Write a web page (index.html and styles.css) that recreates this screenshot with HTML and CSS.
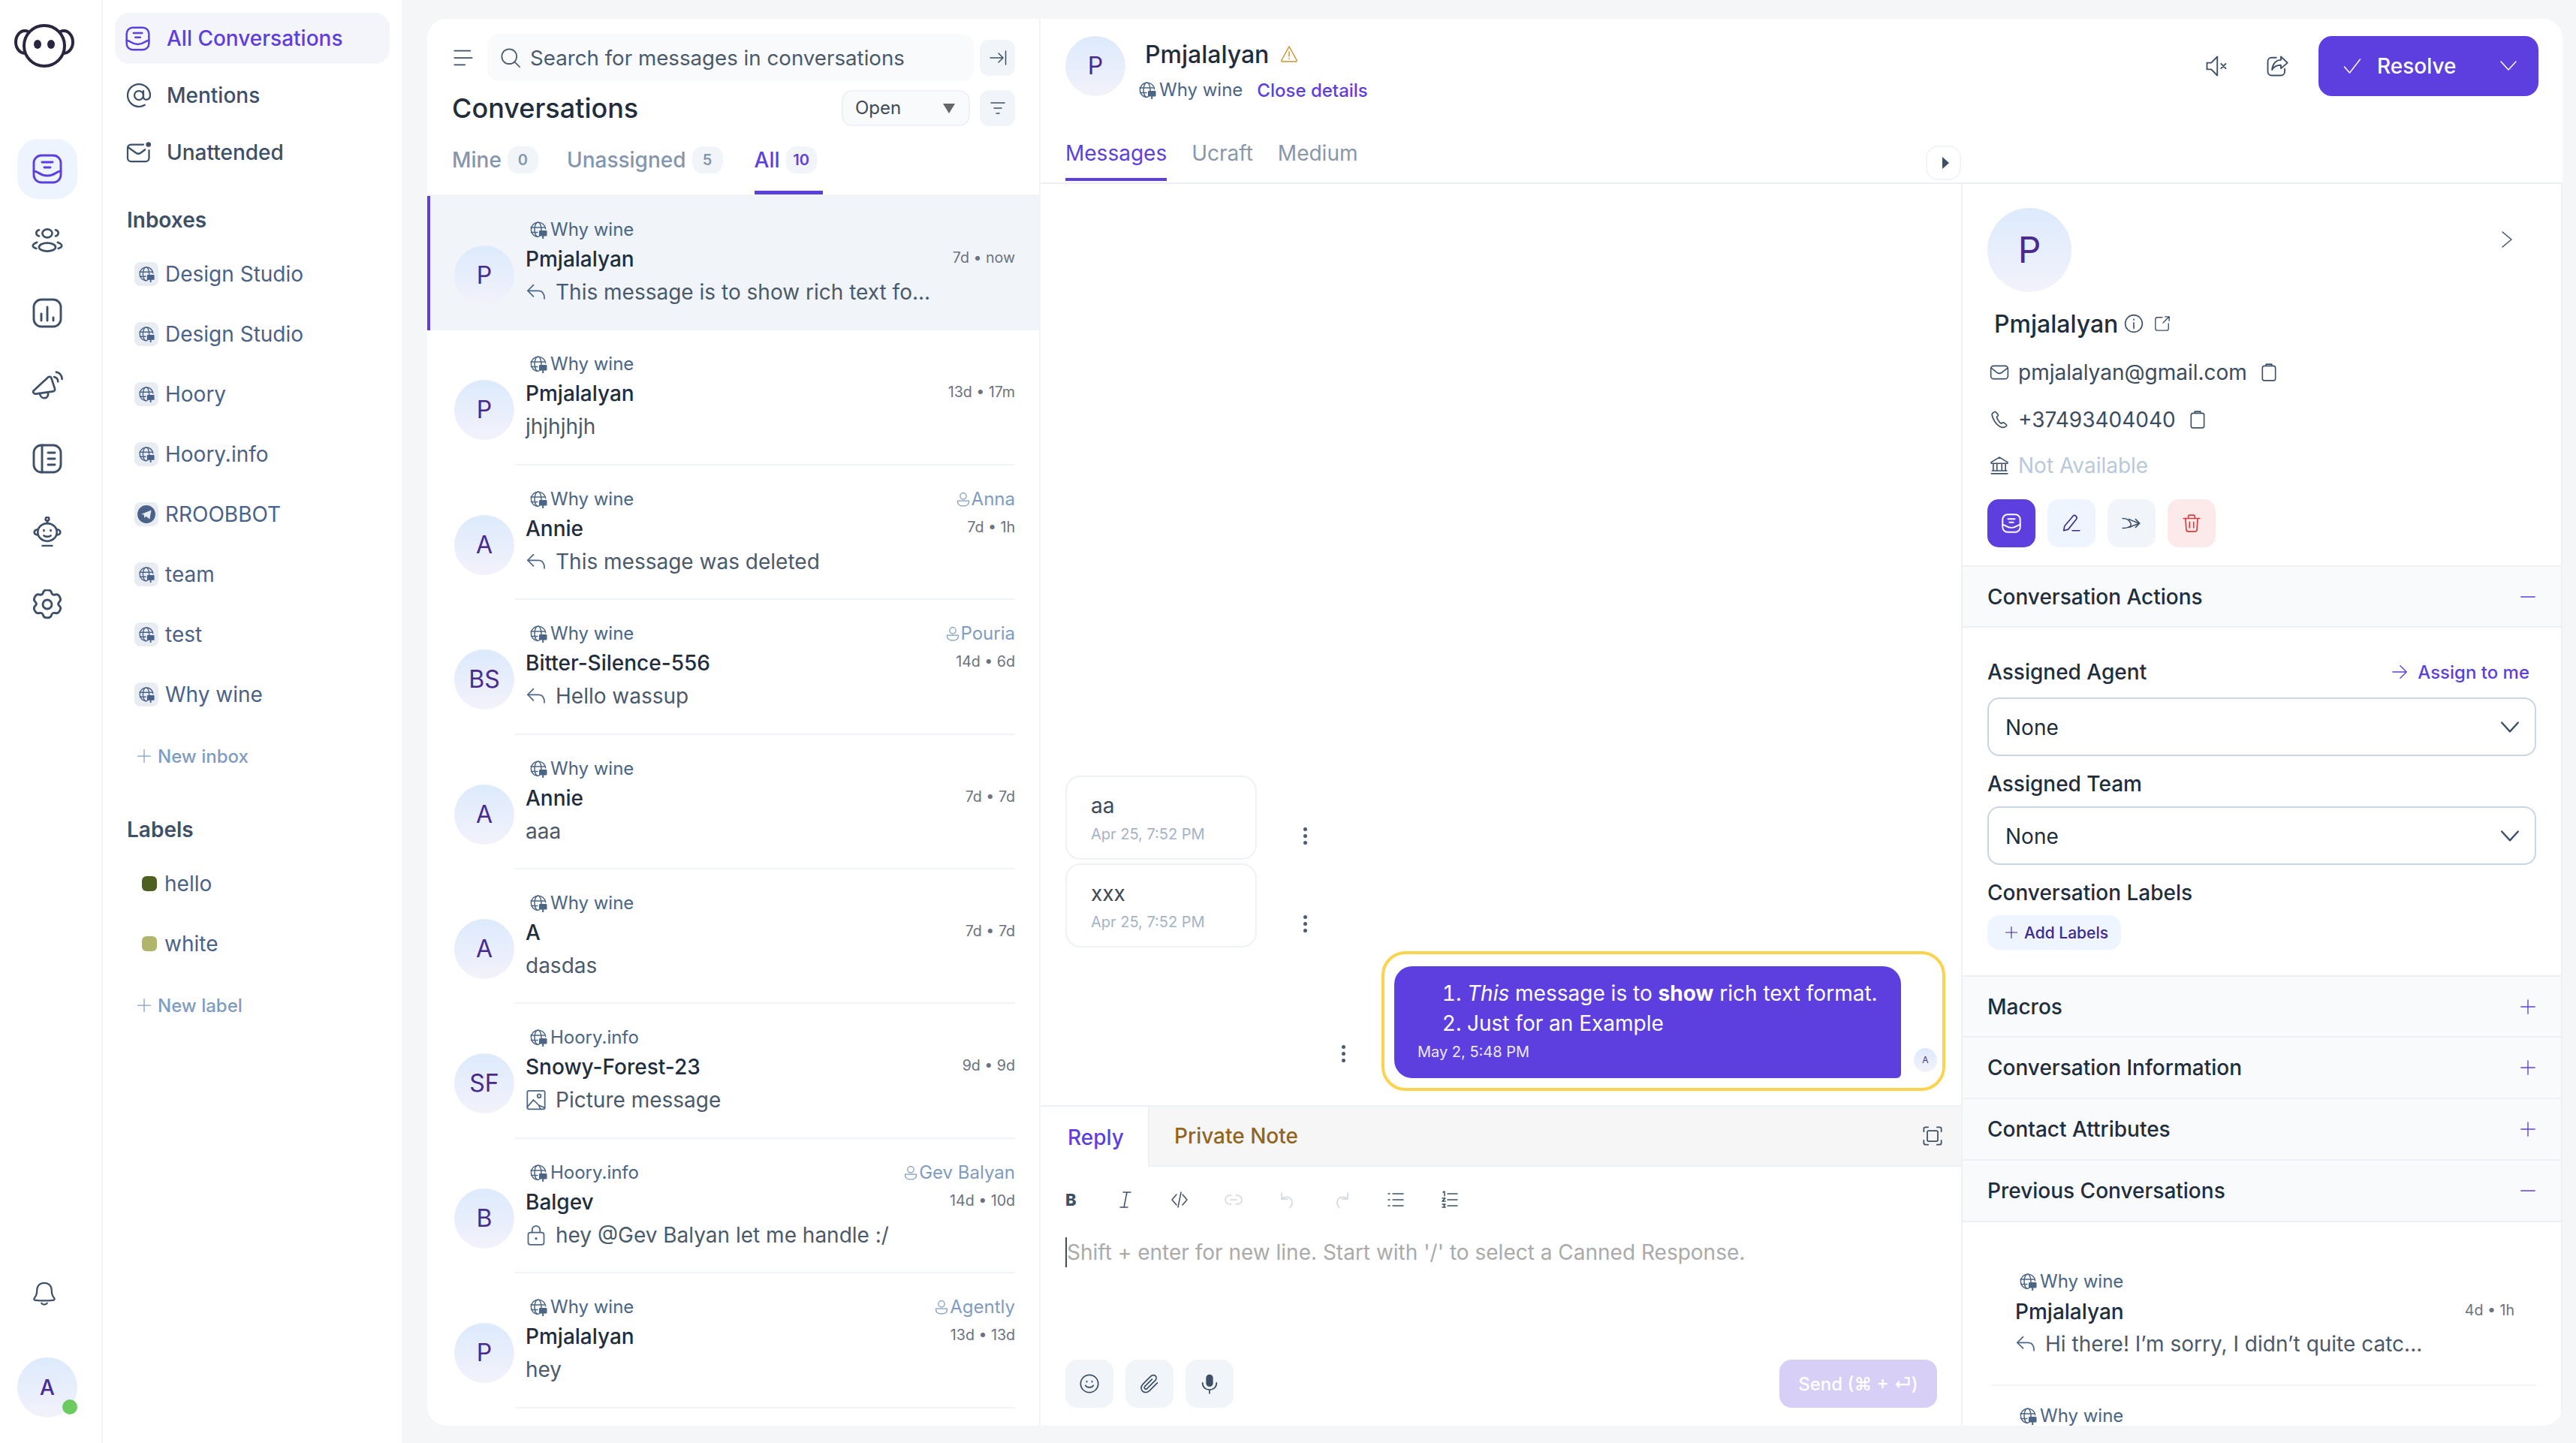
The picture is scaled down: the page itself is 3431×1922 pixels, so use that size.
FILE: index.html

```html
<!DOCTYPE html>
<html>
<head>
<title>Conversations</title>
<link rel="stylesheet" href="styles.css">
</head>
<body>
<svg class="defs">
  <symbol id="i-inbox" viewBox="2 2 20 20"><path d="M8 3h8a5 5 0 0 1 5 5v8a5 5 0 0 1-5 5H8a5 5 0 0 1-5-5V8a5 5 0 0 1 5-5z"/><path d="M3 13.500c3.500 0 3.500 3 9 3s5.500-3 9-3"/><path d="M8.500 7.500h7M10 11h4"/></symbol>
  <symbol id="i-contacts" viewBox="0 0 24 24"><ellipse cx="12" cy="7" rx="3.600" ry="3"/><ellipse cx="12" cy="17" rx="6" ry="3"/><path d="M6 4.500c-1.500.4-2 1.300-2 2.300s.5 1.800 2 2.200M18 4.500c1.500.4 2 1.300 2 2.300s-.5 1.800-2 2.200M4.500 13.500C2.700 14.200 1.500 15 1.500 16s1 1.600 2.500 2M19.500 13.500c1.800.7 3 1.500 3 2.500s-1 1.600-2.500 2"/></symbol>
  <symbol id="i-reports" viewBox="2 2 20 20"><path d="M8 3h8a5 5 0 0 1 5 5v8a5 5 0 0 1-5 5H8a5 5 0 0 1-5-5V8a5 5 0 0 1 5-5z"/><path d="M8 12.500V17M12 8v9M16 15v2"/></symbol>
  <symbol id="i-megaphone" viewBox="0 0 24 24"><path d="M2 15.500c-.6 1.300.3 2.500 1.700 2.300L16 16c1.300-.2 1.800-1 1.400-2.200L15 6.500c-.4-1.200-1.400-1.500-2.400-.8z"/><path d="M6.500 17.500c.3 2 1.700 3.500 3.700 3.300 1.800-.2 2.800-1.800 2.300-4.200"/><path d="M17 5.500c1.500.3 2.700 1.700 2.800 3.300M18.500 2c2.500.4 4 2.500 4.200 5"/></symbol>
  <symbol id="i-book" viewBox="2 2 20 20"><path d="M8 3h8a5 5 0 0 1 5 5v8a5 5 0 0 1-5 5H8a5 5 0 0 1-5-5V8a5 5 0 0 1 5-5z"/><path d="M8.500 3v18M12.500 8H17M12.500 12H17M12.500 16H17"/></symbol>
  <symbol id="i-bot" viewBox="1 1 22 22"><ellipse cx="12" cy="12.500" rx="7" ry="6.500"/><circle cx="12" cy="2.800" r="1.300"/><path d="M12 4.100V6M5 10.500c-1.500.2-2.500 1-2.500 2s1 1.800 2.500 2M19 10.500c1.500.2 2.500 1 2.500 2s-1 1.800-2.500 2M8.500 22.500h7M9.500 15c1.300 1 3.700 1 5 0"/><path d="M9.500 11v.5M14.500 11v.5"/></symbol>
  <symbol id="i-gear" viewBox="2 2 20 20"><path d="M9.500 3.500c.6-1.500 4.400-1.500 5 0l.5 1.200c.3.700 1 1 1.700.9l1.300-.2c1.700-.2 3.500 3 2.500 4.300l-.8 1c-.5.600-.5 1.300 0 1.900l.8 1c1 1.300-.8 4.500-2.500 4.300l-1.300-.2c-.7-.1-1.400.2-1.700.9l-.5 1.200c-.6 1.500-4.400 1.500-5 0l-.5-1.200c-.3-.7-1-1-1.700-.9l-1.300.2c-1.700.2-3.500-3-2.500-4.300l.8-1c.5-.6.5-1.300 0-1.900l-.8-1c-1-1.300.8-4.500 2.500-4.300l1.300.2c.7.1 1.400-.2 1.700-.9z"/><circle cx="12" cy="12" r="3"/></symbol>
  <symbol id="i-bell" viewBox="0 0 24 24"><path d="M12 2.500c-4 0-6.500 2.800-6.500 6.500 0 3.500-.5 5-2.200 6.800-.8.900-.4 2 .9 2.100 5 .5 10.600.5 15.600 0 1.300-.1 1.700-1.200.9-2.100C19 14 18.500 12.500 18.500 9c0-3.700-2.500-6.500-6.500-6.500z"/><path d="M9.500 20.500c1 1.700 4 1.700 5 0"/></symbol>
  <symbol id="i-at" viewBox="0 0 24 24"><circle cx="12" cy="12" r="4"/><path d="M16 8v5.500c0 3.500 6 3 6-1.500 0-5.500-4.500-10-10-10S2 6.500 2 12s4.500 10 10 10c2 0 3.800-.5 5.200-1.500"/></symbol>
  <symbol id="i-mail-dot" viewBox="0 0 24 24"><path d="M16 5H5a3 3 0 0 0-3 3v9a3 3 0 0 0 3 3h13a3 3 0 0 0 3-3v-7"/><path d="m2.500 7.500 7 5c1.500 1 2.500 1 4 0l4-3"/><circle class="solid" cx="20.500" cy="5" r="2.200"/></symbol>
  <symbol id="i-web" viewBox="0 0 24 24"><path d="M11 21.500a9.700 9.700 0 1 1 10.700-10.700"/><ellipse cx="11.500" cy="11.800" rx="4.500" ry="9.700"/><path d="M2 9h19M2.500 15.500H11"/><rect class="solid" x="13" y="13" width="10.500" height="7.500" rx="1"/><path class="thick" d="M18.200 20v3.500"/></symbol>
  <symbol id="i-telegram" viewBox="0 0 24 24"><circle class="solid" cx="12" cy="12" r="11"/><path class="knock" d="m5.500 12 12.500-5-2 11-4.500-3.500-2 2-.5-4z"/></symbol>
  <symbol id="i-plus" viewBox="0 0 24 24"><path d="M12 2v20M2 12h20"/></symbol>
  <symbol id="i-minus" viewBox="0 0 24 24"><path d="M2 12h20"/></symbol>
  <symbol id="i-menu" viewBox="0 0 24 24"><path d="M2 4h18M2 12h20M2 20h12"/></symbol>
  <symbol id="i-search" viewBox="0 0 24 24"><circle cx="10.500" cy="10.500" r="8.500"/><path d="m16.800 16.800 5.700 5.700"/></symbol>
  <symbol id="i-collapse" viewBox="0 0 24 24"><path d="M2 12h17M13 6l6 6-6 6M22.500 3v18"/></symbol>
  <symbol id="i-filter" viewBox="0 0 24 24"><path d="M3 5h18M7 12h10M10 19h4"/></symbol>
  <symbol id="i-reply" viewBox="0 0 24 24"><path d="M9 4 2.500 10.500 9 17"/><path d="M2.500 10.500H15c4 0 6.500 3 6.500 9"/></symbol>
  <symbol id="i-user" viewBox="0 0 24 24"><circle cx="12" cy="7" r="5"/><path d="M3 14.500h18v1.500a6.500 6.500 0 0 1-6.500 6.500h-5A6.500 6.500 0 0 1 3 16z"/></symbol>
  <symbol id="i-picture" viewBox="0 0 24 24"><rect x="2" y="1.500" width="20" height="21" rx="2"/><path d="m2 20 7-8 6 6 2 4.500M15 18l7 3"/><circle cx="15.500" cy="7.500" r="2"/></symbol>
  <symbol id="i-lock" viewBox="0 0 24 24"><rect x="3" y="9" width="18" height="14" rx="2.500"/><path d="M7.500 9V6a4.500 4.500 0 0 1 9 0v3"/><circle class="solid" cx="12" cy="16" r="1.400"/></symbol>
  <symbol id="i-warn" viewBox="0 0 24 24"><path d="M12 2 2 20c-.6 1.200 0 2 1 2h18c1 0 1.600-.8 1-2z"/><path d="M12 9v6M12 18v.5"/></symbol>
  <symbol id="i-mute" viewBox="0 0 24 24"><path d="M2 8.500h4.500L13 2v20l-6.500-6.500H2z"/><path d="m17 9.500 5 5M22 9.500l-5 5"/></symbol>
  <symbol id="i-share" viewBox="0 0 24 24"><path d="M11 3H6a4 4 0 0 0-4 4v11a4 4 0 0 0 4 4h10a4 4 0 0 0 4-4v-3"/><path d="m16 2 7 6.500-7 6V11c-5 0-8 2-9.500 5 .5-6 4-10.500 9.500-10.500z"/></symbol>
  <symbol id="i-check" viewBox="0 0 24 24"><path d="m1.500 13 7 8L22.500 3"/></symbol>
  <symbol id="i-down" viewBox="0 0 24 24"><path d="m2 6 10 11L22 6"/></symbol>
  <symbol id="i-right" viewBox="0 0 24 24"><path d="m6 2 12 10L6 22"/></symbol>
  <symbol id="i-info" viewBox="0 0 24 24"><circle cx="12" cy="12" r="10.500"/><path d="M12 11v7M12 6.500V7.500"/></symbol>
  <symbol id="i-ext" viewBox="0 0 24 24"><path d="M12 3H5a3 3 0 0 0-3 3v13a3 3 0 0 0 3 3h13a3 3 0 0 0 3-3v-7"/><path d="M13 11 22 2M16 2h6v6"/></symbol>
  <symbol id="i-mail" viewBox="0 0 24 24"><rect x="1.500" y="4" width="21" height="16" rx="3.500"/><path d="m2.500 7 7 5.500c1.500 1 3.500 1 5 0l7-5.500"/></symbol>
  <symbol id="i-copy" viewBox="0 0 24 24"><rect x="4" y="4" width="16" height="18" rx="2.500"/><path d="M8.500 4V2h7v2"/></symbol>
  <symbol id="i-phone" viewBox="0 0 24 24"><path d="M6 2.500 3.500 4c-1 1-.5 5 3 10.500S15 22 18 21.500l2.500-1.500c.6-.5.6-1.300.1-1.800l-3-2.500c-.5-.4-1.200-.4-1.700 0l-1.400 1.100c-1.800-.4-5.700-6-5.800-8.300l1.300-1c.5-.4.7-1 .4-1.600L8 3c-.4-.7-1.300-1-2-.5z"/></symbol>
  <symbol id="i-bank" viewBox="0 0 24 24"><path d="M12 2 2 8v1.500h20V8zM4.500 10v8M9 10v8M15 10v8M19.500 10v8M3 18.500h18M2 22h20"/></symbol>
  <symbol id="i-pen" viewBox="0 0 24 24"><path d="M14 3 3.500 15.500 2.500 21l5.500-1.500L18 7c1-1.500.5-3-.5-3.800-1-.9-2.500-1.200-3.500-.2z"/><path d="M13 21h9"/></symbol>
  <symbol id="i-snooze" viewBox="0 0 24 24"><path d="M1 6c6 0 8 2 10 6s-4 6-10 6"/><path d="M9 7c2.500 1 5 3 13 5M9 17c3-1 7-3 13-5M17 7l5 5-5 5"/></symbol>
  <symbol id="i-trash" viewBox="0 0 24 24"><path d="M2 6h20M8 6V3.500c0-1 .7-1.500 1.500-1.500h5c.8 0 1.500.5 1.500 1.500V6M4.500 6l1 14c.1 1.300 1 2 2 2h9c1 0 1.900-.7 2-2l1-14M9.500 10.500v7M14.500 10.500v7"/></symbol>
  <symbol id="i-arrow" viewBox="0 0 24 24"><path d="M2 12h20M13 3l9 9-9 9"/></symbol>
  <symbol id="i-expand" viewBox="0 0 24 24"><path d="M2 7V4a2 2 0 0 1 2-2h3M17 2h3a2 2 0 0 1 2 2v3M22 17v3a2 2 0 0 1-2 2h-3M7 22H4a2 2 0 0 1-2-2v-3"/><rect x="6" y="6" width="12" height="12" rx="1.500"/></symbol>
  <symbol id="i-italic" viewBox="0 0 24 24"><path d="M9 2h10M5 22h10M14 2 10 22"/></symbol>
  <symbol id="i-code" viewBox="0 0 24 24"><path d="M8 5 2 12l6 7M16 5l6 7-6 7M14 2l-4 20"/></symbol>
  <symbol id="i-link" viewBox="0 0 24 24"><path d="M9 6H7a6 6 0 0 0 0 12h2M15 6h2a6 6 0 0 1 0 12h-2M8 12h8"/></symbol>
  <symbol id="i-undo" viewBox="0 0 24 24"><path d="M4 3v8h8"/><path d="M4 11c5-5 13-3 14 4 .4 3-1 5.500-3 7.500"/></symbol>
  <symbol id="i-redo" viewBox="0 0 24 24"><path d="M20 3v8h-8"/><path d="M20 11c-5-5-13-3-14 4-.4 3 1 5.500 3 7.500"/></symbol>
  <symbol id="i-ul" viewBox="0 0 24 24"><path d="M8 4h14M8 12h14M8 20h14M2 4h2M2 12h2M2 20h2"/></symbol>
  <symbol id="i-ol" viewBox="0 0 24 24"><path d="M9 4h13M9 12h13M9 20h13M3 2l2-1v6M2 10h4l-4 4h4M2 18h4l-2 2 2 2H2"/></symbol>
  <symbol id="i-smile" viewBox="0 0 24 24"><circle cx="12" cy="12" r="10"/><path d="M7.500 14c1.500 3 7.500 3 9 0M9 9v1M15 9v1"/></symbol>
  <symbol id="i-clip" viewBox="0 0 24 24"><path d="M21 11 12 20c-2.500 2.500-6 2.500-8 .5s-2-5.500.5-8l9-9c1.700-1.700 4-1.700 5.300-.4s1.300 3.600-.4 5.300l-9 9c-.9.900-2 .900-2.700.2s-.7-1.800.2-2.700l8-8"/></symbol>
  <symbol id="i-mic" viewBox="0 0 24 24"><rect class="solid" x="8" y="1.500" width="8" height="14" rx="4"/><path d="M4 11c0 5 3.500 8 8 8s8-3 8-8M12 19v4"/></symbol>
</svg>

<div class="app">
  <nav class="rail">
    <div class="logo">
      <svg viewBox="0 0 80 58"><ellipse class="ear" cx="14" cy="24" rx="12" ry="15"/><ellipse class="ear" cx="66" cy="24" rx="12" ry="15"/><ellipse class="face" cx="40" cy="29" rx="27" ry="27"/><ellipse class="eye" cx="31" cy="27" rx="5" ry="6"/><ellipse class="eye" cx="49" cy="27" rx="5" ry="6"/></svg>
    </div>
    <a class="rail-item active"><svg class="ic ic-40"><use href="#i-inbox"/></svg></a>
    <a class="rail-item"><svg class="ic ic-44"><use href="#i-contacts"/></svg></a>
    <a class="rail-item"><svg class="ic ic-40"><use href="#i-reports"/></svg></a>
    <a class="rail-item"><svg class="ic ic-44"><use href="#i-megaphone"/></svg></a>
    <a class="rail-item"><svg class="ic ic-40"><use href="#i-book"/></svg></a>
    <a class="rail-item"><svg class="ic ic-40"><use href="#i-bot"/></svg></a>
    <a class="rail-item"><svg class="ic ic-40"><use href="#i-gear"/></svg></a>
    <a class="rail-bell"><svg class="ic ic-36"><use href="#i-bell"/></svg></a>
    <div class="rail-user">A<span class="online"></span></div>
  </nav>

  <aside class="side">
    <a class="side-link active"><svg class="ic ic-33"><use href="#i-inbox"/></svg>All Conversations</a>
    <a class="side-link"><svg class="ic ic-36"><use href="#i-at"/></svg>Mentions</a>
    <a class="side-link"><svg class="ic ic-36"><use href="#i-mail-dot"/></svg>Unattended</a>
    <h3 class="side-title inboxes">Inboxes</h3>
    <div class="side-list">
      <a class="side-row"><span class="chip"><svg class="ic ic-22"><use href="#i-web"/></svg></span>Design Studio</a>
      <a class="side-row"><span class="chip"><svg class="ic ic-22"><use href="#i-web"/></svg></span>Design Studio</a>
      <a class="side-row"><span class="chip"><svg class="ic ic-22"><use href="#i-web"/></svg></span>Hoory</a>
      <a class="side-row"><span class="chip"><svg class="ic ic-22"><use href="#i-web"/></svg></span>Hoory.info</a>
      <a class="side-row"><span class="chip"><svg class="ic ic-26"><use href="#i-telegram"/></svg></span>RROOBBOT</a>
      <a class="side-row"><span class="chip"><svg class="ic ic-22"><use href="#i-web"/></svg></span>team</a>
      <a class="side-row"><span class="chip"><svg class="ic ic-22"><use href="#i-web"/></svg></span>test</a>
      <a class="side-row"><span class="chip"><svg class="ic ic-22"><use href="#i-web"/></svg></span>Why wine</a>
    </div>
    <a class="side-new"><svg class="ic ic-20"><use href="#i-plus"/></svg>New inbox</a>
    <h3 class="side-title labels">Labels</h3>
    <div class="side-list">
      <a class="side-row"><span class="swatch swatch-dark"></span>hello</a>
      <a class="side-row"><span class="swatch swatch-light"></span>white</a>
    </div>
    <a class="side-new"><svg class="ic ic-20"><use href="#i-plus"/></svg>New label</a>
  </aside>

  <main class="main">
    <section class="list">
      <div class="list-top">
        <svg class="ic ic-28 menu"><use href="#i-menu"/></svg>
        <div class="search"><svg class="ic ic-28"><use href="#i-search"/></svg>Search for messages in conversations</div>
        <span class="square"><svg class="ic ic-24"><use href="#i-collapse"/></svg></span>
      </div>
      <div class="list-title">
        <h1>Conversations</h1>
        <div class="status">Open<span class="tri"></span></div>
        <span class="square"><svg class="ic ic-24"><use href="#i-filter"/></svg></span>
      </div>
      <div class="list-tabs">
        <a class="ltab">Mine<span class="count">0</span></a>
        <a class="ltab">Unassigned<span class="count">5</span></a>
        <a class="ltab active">All<span class="count">10</span></a>
      </div>

      <article class="conv active">
        <div class="av">P</div>
        <div class="conv-text">
          <div class="meta"><span class="inbox"><svg class="ic ic-24"><use href="#i-web"/></svg>Why wine</span></div>
          <div class="line-name"><span class="name">Pmjalalyan</span><span class="time">7d • now</span></div>
          <div class="msg"><svg class="ic ic-28"><use href="#i-reply"/></svg>This message is to show rich text fo...</div>
        </div>
      </article>
      <article class="conv">
        <div class="av">P</div>
        <div class="conv-text">
          <div class="meta"><span class="inbox"><svg class="ic ic-24"><use href="#i-web"/></svg>Why wine</span></div>
          <div class="line-name"><span class="name">Pmjalalyan</span><span class="time">13d • 17m</span></div>
          <div class="msg">jhjhjhjh</div>
        </div>
      </article>
      <article class="conv">
        <div class="av">A</div>
        <div class="conv-text">
          <div class="meta"><span class="inbox"><svg class="ic ic-24"><use href="#i-web"/></svg>Why wine</span><span class="agent"><svg class="ic ic-20"><use href="#i-user"/></svg>Anna</span></div>
          <div class="line-name"><span class="name">Annie</span><span class="time">7d • 1h</span></div>
          <div class="msg"><svg class="ic ic-28"><use href="#i-reply"/></svg>This message was deleted</div>
        </div>
      </article>
      <article class="conv">
        <div class="av">BS</div>
        <div class="conv-text">
          <div class="meta"><span class="inbox"><svg class="ic ic-24"><use href="#i-web"/></svg>Why wine</span><span class="agent"><svg class="ic ic-20"><use href="#i-user"/></svg>Pouria</span></div>
          <div class="line-name"><span class="name">Bitter-Silence-556</span><span class="time">14d • 6d</span></div>
          <div class="msg"><svg class="ic ic-28"><use href="#i-reply"/></svg>Hello wassup</div>
        </div>
      </article>
      <article class="conv">
        <div class="av">A</div>
        <div class="conv-text">
          <div class="meta"><span class="inbox"><svg class="ic ic-24"><use href="#i-web"/></svg>Why wine</span></div>
          <div class="line-name"><span class="name">Annie</span><span class="time">7d • 7d</span></div>
          <div class="msg">aaa</div>
        </div>
      </article>
      <article class="conv">
        <div class="av">A</div>
        <div class="conv-text">
          <div class="meta"><span class="inbox"><svg class="ic ic-24"><use href="#i-web"/></svg>Why wine</span></div>
          <div class="line-name"><span class="name">A</span><span class="time">7d • 7d</span></div>
          <div class="msg">dasdas</div>
        </div>
      </article>
      <article class="conv">
        <div class="av">SF</div>
        <div class="conv-text">
          <div class="meta"><span class="inbox"><svg class="ic ic-24"><use href="#i-web"/></svg>Hoory.info</span></div>
          <div class="line-name"><span class="name">Snowy-Forest-23</span><span class="time">9d • 9d</span></div>
          <div class="msg"><svg class="ic ic-28"><use href="#i-picture"/></svg>Picture message</div>
        </div>
      </article>
      <article class="conv">
        <div class="av">B</div>
        <div class="conv-text">
          <div class="meta"><span class="inbox"><svg class="ic ic-24"><use href="#i-web"/></svg>Hoory.info</span><span class="agent"><svg class="ic ic-20"><use href="#i-user"/></svg>Gev Balyan</span></div>
          <div class="line-name"><span class="name">Balgev</span><span class="time">14d • 10d</span></div>
          <div class="msg"><svg class="ic ic-28"><use href="#i-lock"/></svg>hey @Gev Balyan let me handle :/</div>
        </div>
      </article>
      <article class="conv">
        <div class="av">P</div>
        <div class="conv-text">
          <div class="meta"><span class="inbox"><svg class="ic ic-24"><use href="#i-web"/></svg>Why wine</span><span class="agent"><svg class="ic ic-20"><use href="#i-user"/></svg>Agently</span></div>
          <div class="line-name"><span class="name">Pmjalalyan</span><span class="time">13d • 13d</span></div>
          <div class="msg">hey</div>
        </div>
      </article>
    </section>

    <section class="detail">
      <header class="detail-head">
        <div class="head-top">
          <div class="av">P</div>
          <div class="head-who">
            <div class="head-name">Pmjalalyan<svg class="ic ic-24 warn"><use href="#i-warn"/></svg></div>
            <div class="head-sub"><span class="inbox"><svg class="ic ic-24"><use href="#i-web"/></svg>Why wine</span><a class="close-link">Close details</a></div>
          </div>
          <svg class="ic ic-30 head-act"><use href="#i-mute"/></svg>
          <svg class="ic ic-30 head-act"><use href="#i-share"/></svg>
          <button class="resolve"><svg class="ic ic-24"><use href="#i-check"/></svg><span>Resolve</span><svg class="ic ic-24"><use href="#i-down"/></svg></button>
        </div>
        <div class="head-tabs">
          <a class="dtab active">Messages</a>
          <a class="dtab">Ucraft</a>
          <a class="dtab">Medium</a>
          <span class="pane-toggle"></span>
        </div>
      </header>

      <div class="detail-body">
        <div class="thread">
          <div class="msgs">
            <div class="in-row">
              <div class="bubble-in"><div class="b-text">aa</div><div class="b-time">Apr 25, 7:52 PM</div></div>
              <span class="dots"><i></i><i></i><i></i></span>
            </div>
            <div class="in-row">
              <div class="bubble-in"><div class="b-text">xxx</div><div class="b-time">Apr 25, 7:52 PM</div></div>
              <span class="dots"><i></i><i></i><i></i></span>
            </div>
            <div class="out-row">
              <span class="dots"><i></i><i></i><i></i></span>
              <div class="highlight">
                <div class="bubble-out">
                  <ol>
                    <li><em>This</em> message is to <strong>show</strong> rich text format.</li>
                    <li>Just for an Example</li>
                  </ol>
                  <div class="b-date">May 2, 5:48 PM</div>
                </div>
                <div class="av av-mini">A</div>
              </div>
            </div>
          </div>

          <div class="reply">
            <div class="reply-tabs">
              <a class="rtab">Reply</a>
              <div class="rtab-note"><span>Private Note</span><svg class="ic ic-28"><use href="#i-expand"/></svg></div>
            </div>
            <div class="toolbar">
              <b class="tb-bold">B</b>
              <svg class="ic ic-24"><use href="#i-italic"/></svg>
              <svg class="ic ic-24"><use href="#i-code"/></svg>
              <svg class="ic ic-24 off"><use href="#i-link"/></svg>
              <svg class="ic ic-24 off"><use href="#i-undo"/></svg>
              <svg class="ic ic-24 off"><use href="#i-redo"/></svg>
              <svg class="ic ic-24"><use href="#i-ul"/></svg>
              <svg class="ic ic-24"><use href="#i-ol"/></svg>
            </div>
            <div class="editor"><span>Shift + enter for new line. Start with '/' to select a Canned Response.</span></div>
            <div class="reply-foot">
              <span class="tool"><svg class="ic ic-28"><use href="#i-smile"/></svg></span>
              <span class="tool"><svg class="ic ic-28"><use href="#i-clip"/></svg></span>
              <span class="tool"><svg class="ic ic-28"><use href="#i-mic"/></svg></span>
              <button class="send">Send (⌘ + ⏎)</button>
            </div>
          </div>
        </div>

        <div class="info">
          <div class="contact">
            <div class="contact-top">
              <div class="av av-big">P</div>
              <svg class="ic ic-24 contact-next"><use href="#i-right"/></svg>
            </div>
            <div class="contact-name">Pmjalalyan<svg class="ic ic-26"><use href="#i-info"/></svg><svg class="ic ic-22"><use href="#i-ext"/></svg></div>
            <div class="contact-line first"><svg class="ic ic-26"><use href="#i-mail"/></svg>pmjalalyan@gmail.com<svg class="ic ic-26 copy"><use href="#i-copy"/></svg></div>
            <div class="contact-line"><svg class="ic ic-26"><use href="#i-phone"/></svg>+37493404040<svg class="ic ic-26 copy"><use href="#i-copy"/></svg></div>
            <div class="contact-line none"><svg class="ic ic-26"><use href="#i-bank"/></svg>Not Available</div>
            <div class="contact-btns">
              <span class="cbtn cbtn-main"><svg class="ic ic-26"><use href="#i-inbox"/></svg></span>
              <span class="cbtn cbtn-edit"><svg class="ic ic-26"><use href="#i-pen"/></svg></span>
              <span class="cbtn cbtn-merge"><svg class="ic ic-26"><use href="#i-snooze"/></svg></span>
              <span class="cbtn cbtn-del"><svg class="ic ic-26"><use href="#i-trash"/></svg></span>
            </div>
          </div>

          <div class="sec-head first"><span>Conversation Actions</span><svg class="ic ic-22"><use href="#i-minus"/></svg></div>
          <div class="actions">
            <div class="field-top"><label>Assigned Agent</label><a class="assign"><svg class="ic ic-22"><use href="#i-arrow"/></svg>Assign to me</a></div>
            <div class="fake-select">None<svg class="ic ic-26"><use href="#i-down"/></svg></div>
            <label class="field-label">Assigned Team</label>
            <div class="fake-select second">None<svg class="ic ic-26"><use href="#i-down"/></svg></div>
            <label class="field-label">Conversation Labels</label>
            <a class="add-label"><svg class="ic ic-18"><use href="#i-plus"/></svg>Add Labels</a>
          </div>
          <div class="sec-head first"><span>Macros</span><svg class="ic ic-22"><use href="#i-plus"/></svg></div>
          <div class="sec-head"><span>Conversation Information</span><svg class="ic ic-22"><use href="#i-plus"/></svg></div>
          <div class="sec-head"><span>Contact Attributes</span><svg class="ic ic-22"><use href="#i-plus"/></svg></div>
          <div class="sec-head"><span>Previous Conversations</span><svg class="ic ic-22"><use href="#i-minus"/></svg></div>
          <div class="prev">
            <div class="prev-item">
              <div class="meta"><span class="inbox"><svg class="ic ic-24"><use href="#i-web"/></svg>Why wine</span></div>
              <div class="line-name"><span class="name">Pmjalalyan</span><span class="time">4d • 1h</span></div>
              <div class="msg"><svg class="ic ic-28"><use href="#i-reply"/></svg>Hi there! I’m sorry, I didn’t quite catc...</div>
            </div>
            <div class="prev-sep"></div>
            <div class="prev-item">
              <div class="meta"><span class="inbox"><svg class="ic ic-24"><use href="#i-web"/></svg>Why wine</span></div>
            </div>
          </div>
        </div>
      </div>
    </section>
  </main>
</div>
</body>
</html>
```

FILE: styles.css

```css
* { box-sizing: border-box; }

body {
	margin: 0;
	font-family: Inter, "Noto Sans", sans-serif;
	font-size: 28px;
	color: #1f2d3d;
	background: #f5f6f8;
}

h1, h3 { margin: 0; }
a { display: block; }

.defs { display: none; }

/* icons */
.ic {
	flex: none;
	fill: none;
	stroke: currentColor;
	stroke-width: 1.5;
	stroke-linecap: round;
	stroke-linejoin: round;
}
.solid { fill: currentColor; stroke: none; }
.thick { stroke-width: 2; }
.knock { fill: #e8edf3; stroke: none; }
.ic-18 { width: 18px; height: 18px; }
.ic-20 { width: 20px; height: 20px; }
.ic-22 { width: 22px; height: 22px; }
.ic-24 { width: 24px; height: 24px; }
.ic-26 { width: 26px; height: 26px; }
.ic-28 { width: 28px; height: 28px; }
.ic-30 { width: 30px; height: 30px; }
.ic-33 { width: 33px; height: 33px; margin-right: 3px; }
.ic-36 { width: 36px; height: 36px; }
.ic-40 { width: 40px; height: 40px; }
.ic-44 { width: 44px; height: 44px; }

.app {
	display: flex;
	width: 3431px;
	height: 1922px;
	overflow: hidden;
}

/* icon rail */
.rail {
	width: 137px;
	flex: none;
	display: flex;
	flex-direction: column;
	align-items: flex-start;
	padding: 32px 0 34px 23px;
	background: #fff;
	border-right: 2px solid #f1f5f9;
	color: #3d5068;
}
.logo svg {
	display: block;
	width: 80px;
	height: 58px;
	margin-left: -4px;
}
.logo .ear { fill: #fff; stroke: #2b2640; stroke-width: 4; }
.logo .face { fill: #fff; stroke: #2b2640; stroke-width: 4; }
.logo .eye { fill: #2b2640; }
.rail-item {
	width: 80px;
	height: 97px;
	display: flex;
	align-items: center;
	justify-content: center;
}
.rail-item .ic { stroke-width: 1.450; }
.rail-item.active {
	height: 80px;
	margin: 95px 0 6px;
	background: #edf4fe;
	border-radius: 28px;
	color: #5d3fe0;
}
.rail-bell {
	margin: auto 0 0 18px;
	height: 36px;
}
.rail-user {
	position: relative;
	width: 80px;
	height: 80px;
	margin-top: 67px;
	border-radius: 50%;
	background: linear-gradient(#dceafc, #f3f2fb);
	color: #4b2a8f;
	font-size: 28px;
	font-weight: 500;
	line-height: 80px;
	text-align: center;
}
.online {
	position: absolute;
	right: 0;
	bottom: 4px;
	width: 20px;
	height: 20px;
	border-radius: 50%;
	background: #6ccb5f;
}

/* secondary sidebar */
.side {
	width: 398px;
	flex: none;
	padding: 17px 16px 0;
	background: #fff;
	color: #4a6288;
}
.side-link {
	display: flex;
	align-items: center;
	height: 68px;
	margin-bottom: 8px;
	padding-left: 14px;
	gap: 19px;
	border-radius: 20px;
	font-weight: 500;
	color: #3d5068;
}
.side-link.active {
	background: #f4f4fb;
	color: #5d3fe0;
}
.side-title {
	height: 40px;
	padding-left: 16px;
	font-size: 28px;
	font-weight: 600;
	line-height: 40px;
	color: #3d5068;
}
.side-title.inboxes { margin-top: 36px; }
.side-title.labels { margin-top: 58px; }
.side-list { margin-top: 12px; }
.side-row {
	display: flex;
	align-items: center;
	height: 80px;
	padding-left: 26px;
	gap: 9px;
}
.chip {
	width: 32px;
	height: 32px;
	display: flex;
	align-items: center;
	justify-content: center;
	border-radius: 8px;
	background: #e8edf3;
}
.swatch {
	width: 20px;
	height: 20px;
	margin: 0 1px 0 10px;
	border-radius: 6px;
}
.swatch-dark { background: #4e5f22; }
.swatch-light { background: #b1b56b; }
.side-new {
	display: flex;
	align-items: center;
	height: 40px;
	margin-top: 22px;
	padding-left: 29px;
	gap: 8px;
	font-size: 24px;
	font-weight: 500;
	color: #7f9cc0;
}

/* main panel */
.main {
	flex: 1;
	display: flex;
	margin: 25px 18px 23px 34px;
	min-width: 0;
	background: #fff;
	border-radius: 26px;
	overflow: hidden;
}

/* conversation list */
.list {
	width: 817px;
	flex: none;
	border-right: 2px solid #f1f5f9;
	overflow: hidden;
}
.list-top {
	display: flex;
	align-items: center;
	height: 63px;
	margin-top: 20px;
	padding: 0 32px 0 34px;
	color: #3d5068;
}
.menu { margin-right: 18px; }
.search {
	flex: 1;
	display: flex;
	align-items: center;
	height: 63px;
	padding-left: 17px;
	gap: 12px;
	margin-right: 8px;
	border-radius: 16px;
	background: #f8fafc;
	font-size: 27.700px;
	color: #4b5a6b;
}
.square {
	width: 47px;
	height: 48px;
	flex: none;
	display: flex;
	align-items: center;
	justify-content: center;
	border-radius: 12px;
	background: #f1f5f9;
	color: #3d5068;
}
.list-title {
	display: flex;
	align-items: center;
	height: 48px;
	margin-top: 12px;
	padding: 0 32px 0 33px;
}
.list-title h1 {
	flex: 1;
	font-size: 36px;
	font-weight: 500;
	color: #1f2d3d;
}
.status {
	position: relative;
	width: 171px;
	height: 48px;
	margin-right: 13px;
	padding-left: 16px;
	border: 2px solid #eef1f5;
	border-radius: 14px;
	background: #f8fafc;
	font-size: 24px;
	line-height: 44px;
	color: #3f4a57;
}
.tri {
	position: absolute;
	top: 16px;
	right: 18px;
	border: 8px solid transparent;
	border-top: 13px solid #666;
	border-bottom: 0;
}
.list-tabs {
	display: flex;
	height: 75px;
	margin-top: 18px;
	padding-left: 33px;
	border-bottom: 2px solid #f1f5f9;
}
.ltab {
	display: flex;
	align-items: center;
	height: 73px;
	gap: 8px;
	margin-right: 38px;
	padding-bottom: 14px;
	border-bottom: 5px solid transparent;
	font-weight: 500;
	color: #8496ad;
}
.ltab:nth-child(2) { margin-right: 42px; }
.ltab.active {
	margin-right: 0;
	padding-right: 8px;
	border-bottom-color: #5d3fe0;
	color: #5d3fe0;
}
.count {
	display: block;
	width: 41px;
	height: 36px;
	border-radius: 14px;
	background: #f1f5f9;
	font-size: 20px;
	font-weight: 600;
	line-height: 36px;
	text-align: center;
	color: #8496ad;
}
.ltab.active .count { color: #5d3fe0; }

.conv {
	display: flex;
	height: 179.400px;
	padding: 0 32px 0 36px;
}
.conv.active {
	background: #f1f5f9;
	box-shadow: inset 4px 0 #5d3fe0;
}
.conv.active .conv-text { border-bottom-color: transparent; }
.av {
	width: 80px;
	height: 80px;
	flex: none;
	border-radius: 50%;
	background: linear-gradient(#dceafc, #f3f2fb);
	font-size: 32px;
	line-height: 80px;
	text-align: center;
	color: #4b2a8f;
}
.conv .av { margin-top: 66px; }
.conv-text {
	flex: 1;
	min-width: 0;
	padding: 33px 0 0 15px;
	border-bottom: 2px solid #f1f5f9;
}
.meta {
	display: flex;
	justify-content: space-between;
	height: 24px;
}
.inbox {
	display: flex;
	align-items: center;
	gap: 4px;
	padding-left: 5px;
	font-size: 24px;
	line-height: 24px;
	color: #4a6585;
}
.agent {
	display: flex;
	align-items: center;
	gap: 1px;
	font-size: 24px;
	line-height: 24px;
	color: #7f9cc0;
}
.line-name {
	display: flex;
	justify-content: space-between;
	align-items: center;
	height: 30px;
	margin-top: 12px;
}
.name {
	font-weight: 500;
	line-height: 30px;
	color: #1f2d3d;
}
.time {
	margin-bottom: 4px;
	font-size: 19.600px;
	color: #6b7280;
}
.msg {
	display: flex;
	align-items: center;
	gap: 12px;
	height: 30px;
	margin-top: 14px;
	line-height: 30px;
	color: #4b5a6b;
}
.msg .ic { color: #4a6585; }

/* right part */
.detail {
	flex: 1;
	min-width: 0;
	display: flex;
	flex-direction: column;
}
.detail-head {
	height: 220px;
	flex: none;
	border-bottom: 2px solid #edf0f4;
}
.head-top {
	display: flex;
	align-items: center;
	height: 80px;
	margin-top: 23px;
	padding: 0 32px 0 33px;
}
.head-who {
	flex: 1;
	align-self: flex-start;
	padding: 4px 0 0 26px;
}
.head-name {
	display: flex;
	align-items: center;
	gap: 15px;
	height: 40px;
	font-size: 32px;
	font-weight: 500;
	color: #1f2d3d;
}
.warn { color: #c9962b; }
.head-sub {
	display: flex;
	align-items: center;
	height: 30px;
	margin: 13px 0 0 -14px;
	gap: 19px;
}
.close-link {
	font-size: 24px;
	font-weight: 500;
	color: #5d3fe0;
}
.head-act {
	margin-right: 51px;
	color: #3d5068;
}
.head-act + .resolve { margin-left: -11px; }
.resolve {
	display: flex;
	align-items: center;
	width: 293px;
	height: 80px;
	padding: 0 28px 0 33px;
	border: 0;
	border-radius: 18px;
	background: #5d3fe0;
	font: 500 28px Inter, sans-serif;
	color: #fff;
}
.resolve span {
	flex: 1;
	padding-left: 21px;
	text-align: left;
}
.head-tabs {
	display: flex;
	height: 57px;
	padding: 0 801px 0 33px;
	margin-top: 56px;
	gap: 33px;
}
.dtab {
	height: 57px;
	line-height: 40px;
	border-bottom: 4px solid transparent;
	font-weight: 400;
	color: #8a97a8;
}
.dtab.active {
	border-bottom-color: #5d3fe0;
	color: #5d3fe0;
}
.pane-toggle {
	position: relative;
	width: 47px;
	height: 46px;
	margin: 10px 0 0 auto;
	border: 2px solid #f1f5f9;
	border-radius: 16px;
	background: #fff;
}
.pane-toggle::after {
	content: "";
	position: absolute;
	top: 13px;
	left: 20px;
	border: 8px solid transparent;
	border-left: 9px solid #3d5068;
	border-right: 0;
}

.detail-body {
	flex: 1;
	min-height: 0;
	display: flex;
}
.thread {
	flex: 1;
	min-width: 0;
	display: flex;
	flex-direction: column;
}
.msgs {
	flex: 1;
	display: flex;
	flex-direction: column;
	justify-content: flex-end;
	padding: 0 21px 19px 33px;
}
.in-row {
	display: flex;
	align-items: flex-end;
	margin-bottom: 5px;
}
.bubble-in {
	width: 255px;
	height: 112px;
	padding: 20px 32px 0;
	border: 2px solid #eef1f5;
	border-radius: 20px;
}
.b-text {
	line-height: 36px;
	color: #3f4a57;
}
.b-time {
	margin-top: 6px;
	font-size: 20px;
	line-height: 28px;
	color: #a5b3c5;
}
.dots {
	display: flex;
	flex-direction: column;
	gap: 4px;
	width: 5px;
	margin: 0 0 20px 62px;
}
.dots i {
	width: 5px;
	height: 5px;
	border-radius: 50%;
	background: #4a5d74;
}
.out-row {
	display: flex;
	align-items: flex-end;
	justify-content: flex-end;
}
.out-row .dots { margin: 0 48px 38px 0; }
.highlight {
	display: flex;
	align-items: flex-end;
	width: 751px;
	height: 186px;
	padding: 16px 6px 13px 13px;
	border: 4px solid #fcd34d;
	border-radius: 32px;
}
.bubble-out {
	width: 675px;
	height: 149px;
	padding-top: 16px;
	border-radius: 24px 24px 6px 24px;
	background: #5d3fe0;
	color: #fff;
}
.bubble-out ol {
	margin: 0;
	padding-left: 97px;
	line-height: 40px;
}
.bubble-out strong { font-weight: 700; }
.b-date {
	margin: 4px 0 0 31px;
	font-size: 20px;
	line-height: 28px;
	color: #ece9fb;
}
.av-mini {
	width: 31px;
	height: 32px;
	margin: 0 0 8px 17px;
	font-size: 12px;
	line-height: 32px;
}

/* reply box */
.reply {
	height: 427px;
	flex: none;
	display: flex;
	flex-direction: column;
	padding-bottom: 24px;
	border-top: 2px solid #edf0f4;
}
.reply-tabs {
	display: flex;
	height: 80px;
	flex: none;
}
.rtab {
	width: 143px;
	padding-left: 36px;
	font-weight: 500;
	line-height: 82px;
	color: #5d3fe0;
}
.rtab-note {
	flex: 1;
	display: flex;
	align-items: center;
	justify-content: space-between;
	padding: 0 24px 0 33px;
	border-left: 2px solid #edf0f4;
	border-bottom: 2px solid #edf0f4;
	background: #f6f6f7;
	font-weight: 500;
	color: #92651f;
}
.rtab-note .ic { color: #3d5068; }
.toolbar {
	display: flex;
	align-items: center;
	height: 24px;
	margin-top: 32px;
	padding-left: 29px;
	gap: 48px;
	color: #3d5068;
}
.toolbar .off { color: #cfd6df; }
.tb-bold {
	width: 24px;
	padding-left: 4px;
	font-size: 22px;
	font-weight: 800;
	line-height: 24px;
}
.editor {
	margin-top: 38px;
	padding-left: 33px;
}
.editor span {
	display: inline-block;
	border-left: 2px solid #3d4b5f;
	line-height: 40px;
	color: #aaa;
}
.reply-foot {
	display: flex;
	margin-top: auto;
	padding: 0 32px 0 33px;
	gap: 16px;
}
.tool {
	width: 64px;
	height: 64px;
	display: flex;
	align-items: center;
	justify-content: center;
	border-radius: 16px;
	background: #f1f5f9;
	color: #3d5068;
}
.send {
	width: 210px;
	height: 64px;
	margin-left: auto;
	border: 0;
	border-radius: 16px;
	background: #d7cff6;
	font: 500 24px Inter, "DejaVu Sans", sans-serif;
	color: #fff;
}

/* contact column */
.info {
	width: 801px;
	flex: none;
	border-left: 2px solid #eef1f5;
	border-right: 2px solid #eef1f5;
	overflow: hidden;
}
.contact {
	height: 508px;
	padding: 32px 0 0 33px;
}
.contact-top {
	display: flex;
	justify-content: space-between;
	height: 112px;
	padding-right: 60px;
}
.av-big {
	width: 112px;
	height: 112px;
	font-size: 48px;
	line-height: 112px;
}
.contact-next {
	margin-top: 30px;
	color: #3d5068;
}
.contact-name {
	display: flex;
	align-items: center;
	gap: 8px;
	height: 40px;
	margin: 22px 0 0 9px;
	font-size: 32px;
	font-weight: 500;
	color: #1f2d3d;
}
.contact-name .ic { color: #3d5068; }
.contact-name .ic + .ic { margin-left: 6px; }
.contact-line {
	display: flex;
	align-items: center;
	height: 40px;
	margin-top: 23px;
	padding-left: 3px;
	gap: 12px;
	color: #3d4b5f;
}
.contact-line.first { margin-top: 25px; }
.contact-line .ic { color: #3d5068; }
.contact-line .copy { margin-left: 4px; }
.contact-line.none { margin-top: 21px; color: #b9c9dc; }
.contact-btns {
	display: flex;
	gap: 16px;
	margin-top: 25px;
}
.cbtn {
	width: 64px;
	height: 64px;
	display: flex;
	align-items: center;
	justify-content: center;
	border-radius: 15px;
}
.cbtn-main { background: #5d3fe0; color: #fff; }
.cbtn-edit { background: #eef5fe; color: #3e2a8f; }
.cbtn-merge { background: #f1f5f9; color: #3d5068; }
.cbtn-del { background: #fce9ea; color: #dc3a3a; }

.sec-head {
	display: flex;
	align-items: center;
	justify-content: space-between;
	height: 82px;
	padding: 0 33px;
	border-bottom: 2px solid #edf0f4;
	background: #f8fafc;
	font-weight: 500;
	color: #1f2d3d;
}
.sec-head.first { height: 83px; border-top: 2px solid #edf0f4; }
.sec-head .ic { color: #5d3fe0; }
.actions {
	height: 463px;
	padding: 41px 33px 0;
}
.field-top {
	display: flex;
	justify-content: space-between;
	align-items: center;
	height: 36px;
	font-weight: 500;
	padding-right: 9px;
}
.assign {
	display: flex;
	align-items: center;
	gap: 13px;
	font-size: 24px;
	color: #5d3fe0;
}
.fake-select {
	display: flex;
	align-items: center;
	justify-content: space-between;
	width: 731px;
	height: 78px;
	margin-top: 16px;
	padding: 2px 20px 0 22px;
	border: 2px solid #cbd5e1;
	border-radius: 16px;
	color: #1f2d3d;
}
.fake-select.second { margin-top: 12px; }
.fake-select .ic { stroke-width: 2.200; color: #3d5068; }
.field-label {
	display: block;
	height: 36px;
	margin-top: 19px;
	font-weight: 500;
	line-height: 36px;
}
.add-label {
	display: flex;
	align-items: center;
	gap: 8px;
	width: 178px;
	height: 46px;
	margin-top: 12px;
	padding-left: 23px;
	border-radius: 16px;
	background: #eef5fe;
	font-size: 21px;
	font-weight: 500;
	color: #3e2a8f;
}
.prev { padding-top: 67px; }
.prev-item { padding: 0 62px 0 70px; }
.prev-item .line-name { margin-top: 13px; }
.prev-item .msg { margin-top: 13px; }
.prev-sep {
	height: 2px;
	margin: 39px 33px 28px 38px;
	border-radius: 2px;
	background: #f1f5f9;
}
```
